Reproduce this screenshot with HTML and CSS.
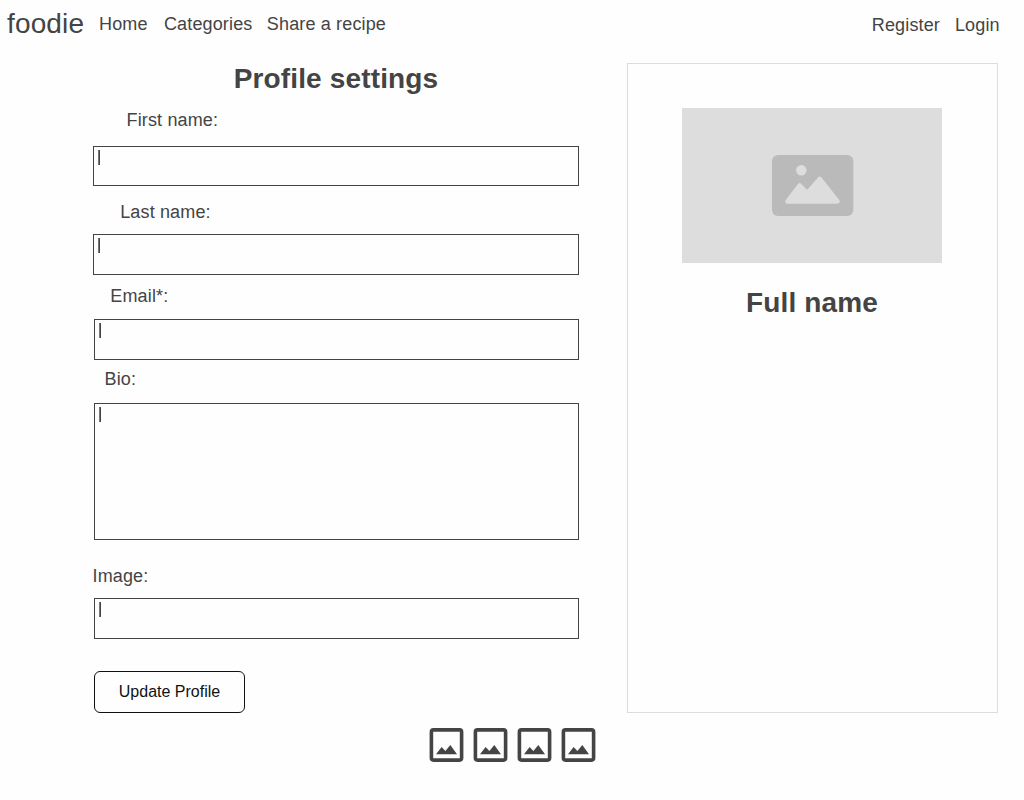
FILE: index.html
```
<!DOCTYPE html>
<html lang="en">
<head>
<meta charset="utf-8">
<title>foodie - Profile settings</title>
<link rel="stylesheet" href="styles.css">
</head>
<body>
<header class="topbar">
  <a class="brand">foodie</a>
  <nav class="nav">
    <a>Home</a>
    <a class="nav-categories">Categories</a>
    <a class="nav-share">Share a recipe</a>
  </nav>
  <nav class="account">
    <a>Register</a>
    <a>Login</a>
  </nav>
</header>
<main class="content">
  <form class="form">
    <h1 class="title">Profile settings</h1>
    <label class="label label-first">First name:</label>
    <div class="field field-first"><span class="caret"></span></div>
    <label class="label label-last">Last name:</label>
    <div class="field field-last"><span class="caret"></span></div>
    <label class="label label-email">Email*:</label>
    <div class="field field-email"><span class="caret"></span></div>
    <label class="label label-bio">Bio:</label>
    <div class="field field-bio"><span class="caret"></span></div>
    <label class="label label-image">Image:</label>
    <div class="field field-image"><span class="caret"></span></div>
    <button class="submit" type="button">Update Profile</button>
  </form>
  <aside class="card">
    <div class="photo">
      <svg width="82" height="62" viewBox="0 0 82 62">
        <rect x="0" y="0" width="81.3" height="61" rx="6" fill="#bababa"/>
        <circle cx="29.3" cy="15.2" r="5.2" fill="#dddddd"/>
        <path d="M15.5 46.5 L27.8 30.5 L35.2 38.2 L47.7 24 L65.5 46.5 Z" fill="#dddddd" stroke="#dddddd" stroke-width="4.6" stroke-linejoin="round"/>
      </svg>
    </div>
    <h2 class="fullname">Full name</h2>
  </aside>
</main>
<footer class="footer">
  <svg class="icon" viewBox="0 0 35 34"><rect class="frame" x="2.4" y="1.9" width="30.2" height="30.2" rx="2"/><path class="hills" d="M7 26.2 L12.6 19 L16.4 23 L21.3 17 L28 26.2 Z"/></svg>
  <svg class="icon" viewBox="0 0 35 34"><rect class="frame" x="2.4" y="1.9" width="30.2" height="30.2" rx="2"/><path class="hills" d="M7 26.2 L12.6 19 L16.4 23 L21.3 17 L28 26.2 Z"/></svg>
  <svg class="icon" viewBox="0 0 35 34"><rect class="frame" x="2.4" y="1.9" width="30.2" height="30.2" rx="2"/><path class="hills" d="M7 26.2 L12.6 19 L16.4 23 L21.3 17 L28 26.2 Z"/></svg>
  <svg class="icon" viewBox="0 0 35 34"><rect class="frame" x="2.4" y="1.9" width="30.2" height="30.2" rx="2"/><path class="hills" d="M7 26.2 L12.6 19 L16.4 23 L21.3 17 L28 26.2 Z"/></svg>
</footer>
</body>
</html>
```
FILE: styles.css
```
* { box-sizing: border-box; }
body {
  margin: 0;
  height: 800px;
  background: #fefefe;
  color: #444;
  font: 18px/20px "Liberation Sans", Arial, sans-serif;
  letter-spacing: 0.15px;
}
.topbar { display: flex; align-items: flex-start; height: 63px; padding: 8px 24.3px 0 7px; }
.brand { font-size: 28px; line-height: 32px; width: 92px; }
.nav { display: flex; padding-top: 6px; }
.nav-categories { margin-left: 16.3px; }
.nav-share { margin-left: 14.4px; }
.account { display: flex; gap: 14.9px; margin-left: auto; padding-top: 7px; }
.content { display: flex; height: 650px; padding-left: 93px; }
.form { display: flex; flex-direction: column; align-items: flex-start; width: 486px; }
.title { align-self: center; margin: 0; font-size: 28px; line-height: 32px; }
.label { flex: none; height: 20px; }
.label-first { margin: 15px 0 16px 33.5px; }
.label-last { margin: 16px 0 12px 27.2px; }
.label-email { margin: 11px 0 13px 17.3px; }
.label-bio { margin: 9px 0 14px 11.5px; }
.label-image { margin: 26px 0 12px -0.5px; }
.field { flex: none; display: flex; align-self: flex-end; width: 485px; height: 41px; padding: 3px 4px; border: 1px solid #444; background: #fefefe; }
.field-first { width: 486px; height: 40px; }
.field-last { width: 486px; }
.field-bio { height: 137px; }
.caret { width: 2px; height: 15px; background: #444; border-left: 1px solid #777; }
.submit {
  width: 151px; height: 42px; margin: 32px 0 0 1px; padding: 0;
  border: 1px solid #111; border-radius: 6px; background: #fefefe; color: #111;
  font: 16px/20px "Liberation Sans", Arial, sans-serif;
}
.card { display: flex; flex-direction: column; align-items: center; width: 371px; height: 650px; margin-left: 48px; padding: 44px 1px 0 0; border: 1px solid #ddd; }
.photo { display: flex; width: 260px; height: 155px; padding: 47px 0 0 90px; background: #ddd; }
.fullname { margin: 24px 0 0; font-size: 28px; line-height: 32px; }
.footer { display: flex; gap: 9px; padding: 15px 0 0 429px; }
.icon { width: 35px; height: 34px; }
.frame { fill: none; stroke: #444; stroke-width: 3.6; }
.hills { fill: #444; }
```
